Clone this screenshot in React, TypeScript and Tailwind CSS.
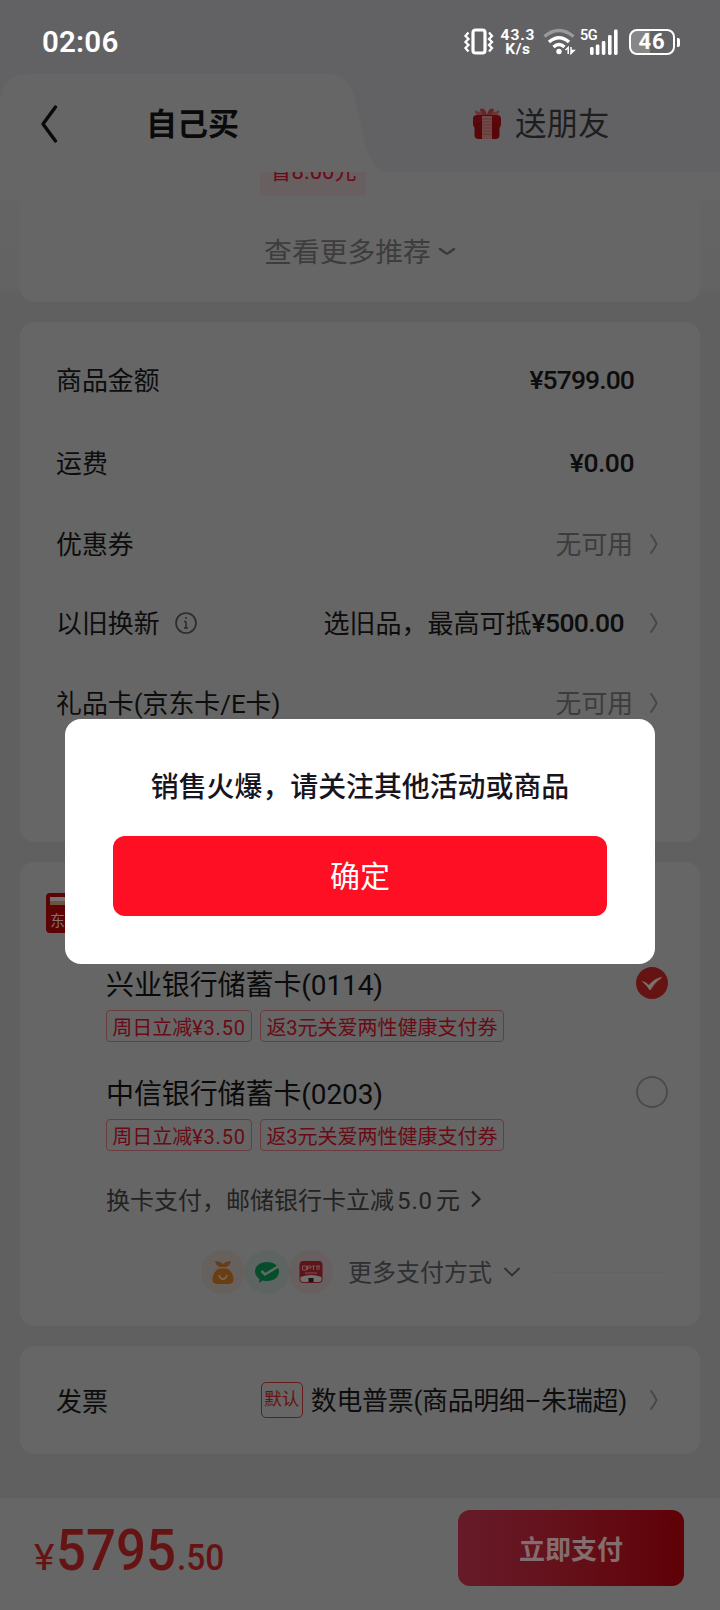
import React from "react";

const font =
  "font-[Roboto,'Noto_Sans_CJK_SC',sans-serif]";

function Arrow() {
  return (
    <svg width="10" height="22" viewBox="0 0 10 22" fill="none" className="shrink-0">
      <path d="M1.5 1.5 Q4 4 7.6 11 Q4 18 1.5 20.5" stroke="#474747" strokeWidth="1.8" />
    </svg>
  );
}

function StatusBar() {
  return (
    <div className="flex h-[72px] items-center pl-[42px] pr-[40px] text-white">
      <span className="mt-[14px] text-[29.5px] font-semibold leading-none tracking-[0.2px]">02:06</span>
      <div className="ml-auto mt-[12px] flex items-center">
        <svg width="32" height="28" viewBox="0 0 32 28" fill="none" stroke="#fff">
          <rect x="10" y="2" width="12" height="23" rx="2.5" strokeWidth="3.2" />
          <path d="M5.5 4.5 L2.5 8 L5.5 11 L2.5 14 L5.5 17 L2.5 20 L5.5 23.5" strokeWidth="2.3" />
          <path d="M26 4.5 L29 8 L26 11 L29 14 L26 17 L29 20 L26 23.5" strokeWidth="2.3" />
        </svg>
        <div className="ml-[5px] flex w-[36px] flex-col items-center text-[15.5px] font-bold leading-[14px]">
          <span className="tracking-[0.9px]">43.3</span>
          <span className="tracking-[0.6px]">K/s</span>
        </div>
        <svg className="ml-[7px]" width="33" height="28" viewBox="0 0 33 28" fill="none">
          <path d="M1.5 8.5 Q16 -3.5 30.5 8.5" stroke="#9a9a9b" strokeWidth="3.4" />
          <path d="M6 14 Q16 5.5 26 14" stroke="#fff" strokeWidth="3.6" />
          <path d="M10.5 19 Q16 14 21.5 19" stroke="#fff" strokeWidth="3.4" />
          <circle cx="16" cy="23.5" r="2.7" fill="#fff" />
          <path d="M22.5 22 L25.2 19.5 V26 M28 19 V25.5 L31 22.5 H28" stroke="#fff" strokeWidth="1.5" />
        </svg>
        <div className="relative ml-[4px] h-[28px] w-[40px]">
          <svg width="39" height="28" viewBox="0 0 39 28" fill="#fff">
            <rect x="10" y="19" width="3.6" height="8" rx="1.4" />
            <rect x="15.8" y="16.5" width="3.6" height="10.5" rx="1.4" />
            <rect x="21.8" y="13" width="3.6" height="14" rx="1.4" />
            <rect x="28" y="7" width="3.6" height="20" rx="1.4" />
            <rect x="34" y="1.5" width="3.6" height="25.5" rx="1.4" />
          </svg>
          <span className="absolute left-0 top-[1px] text-[14.5px] font-semibold leading-none tracking-[-0.5px]">5G</span>
        </div>
        <div className="ml-[9px] flex items-center">
          <div className="flex h-[26px] w-[46px] items-center justify-center rounded-[8px] border-[2px] border-white bg-[linear-gradient(90deg,#868687_46%,#626264_46%)] text-[22px] font-bold leading-none tracking-[1px]">
            46
          </div>
          <div className="ml-[2px] h-[9px] w-[3px] rounded-r-[2px] bg-white" />
        </div>
      </div>
    </div>
  );
}

function Gift() {
  return (
    <svg width="30" height="32" viewBox="0 0 30 32">
      <path d="M11 8 C5 8 2 5 3 2 C5 4 9 3 12 7 Z M19 8 C25 8 28 5 27 2 C25 4 21 3 18 7 Z" fill="#713433" />
      <path d="M8 1 C12 -1 14 3 15 7 C16 3 18 -1 22 1 C22 5 18 8 15 8 C12 8 8 5 8 1 Z" fill="#672525" />
      <rect x="1" y="7" width="28" height="13" rx="4" fill="#5d080c" />
      <rect x="2.5" y="15" width="25" height="16" rx="4" fill="#570609" />
      <rect x="10" y="8" width="10" height="23" fill="#704a47" />
      <path d="M10 11 H20 M10 14 H20 M10 17 H20 M10 20 H20 M10 23 H20 M10 26 H20" stroke="#65393a" strokeWidth="1" />
    </svg>
  );
}

function Header() {
  return (
    <div className="relative h-[100px]">
      <svg className="absolute left-0 top-0" width="400" height="100" viewBox="0 0 400 100">
        <path d="M0 26 Q3 2 28 2 H328 Q348 2 354 24 L366 74 Q372 98 390 100 H0 Z" fill="#666666" />
      </svg>
      <div className="relative flex h-full items-center pt-[3px]">
        <svg className="ml-[40px]" width="19" height="40" viewBox="0 0 19 40" fill="none">
          <path d="M15.5 3 L3 20 L15.5 37" stroke="#0a0a0a" strokeWidth="3.4" strokeLinecap="round" strokeLinejoin="round" />
        </svg>
        <span className="ml-[87px] w-[95px] whitespace-nowrap pt-px text-[31px] font-bold leading-none text-[#0a0a0a]">自己买</span>
        <div className="ml-[231px] flex items-center">
          <Gift />
          <span className="ml-[13px] whitespace-nowrap pt-[2px] text-[31.5px] leading-none text-[#1e1e1f]">送朋友</span>
        </div>
      </div>
    </div>
  );
}

function Row({ label, h, children, info }: { label: string; h: string; children: React.ReactNode; info?: boolean }) {
  return (
    <div className={`flex items-center leading-none ${h}`}>
      <span className="pt-[3px] text-[25.9px] text-[#0d0d0d]">{label}</span>
      {info && (
        <svg className="ml-[14px]" width="24" height="24" viewBox="0 0 24 24" fill="none" stroke="#2b2b2b">
          <circle cx="12" cy="12" r="10" strokeWidth="1.6" />
          <path d="M12 10.5 V17.5 M10 10.5 H12 M10 17 H14" strokeWidth="1.5" />
          <circle cx="12" cy="7" r="0.9" fill="#2b2b2b" stroke="none" />
        </svg>
      )}
      <div className="ml-auto flex items-center">{children}</div>
    </div>
  );
}

function Unavailable() {
  return (
    <>
      <span className="mr-[16px] pt-[3px] text-[25.8px] text-[#3c3c3c]">无可用</span>
      <Arrow />
    </>
  );
}

function Tags() {
  return (
    <div className="flex gap-[8px] text-[20px] leading-none text-[#6a0a15]">
      <span className="flex h-[32px] w-[146px] items-center justify-center whitespace-nowrap rounded-[4px] border border-[#6b3b40] pt-[3px]">
        周日立减<span className="tracking-[0.8px]">¥3.50</span>
      </span>
      <span className="flex h-[32px] w-[244px] items-center justify-center whitespace-nowrap rounded-[4px] border border-[#6b3b40] pt-[3px]">返3元关爱两性健康支付券</span>
    </div>
  );
}

function BankCard({ name, selected }: { name: string; selected?: boolean }) {
  return (
    <div className="h-[109px]">
      <div className="flex h-[40px] items-center justify-between">
        <span className="whitespace-nowrap pt-[5px] text-[28px] leading-none tracking-[-0.1px] text-[#0a0a0a]">{name}</span>
        {selected ? (
          <svg width="32" height="32" viewBox="0 0 32 32">
            <circle cx="16" cy="16" r="16" fill="#651413" />
            <path d="M6.5 14.5 Q11 16 13 18.500 Q18 12 25.5 10.500 Q19 14.5 14 23 Q11 18 6.5 14.5 Z" fill="#7e7270" stroke="#7e7270" strokeWidth="0.8" strokeLinejoin="round" />
          </svg>
        ) : (
          <span className="h-[32px] w-[32px] rounded-full border-2 border-[#4c4c4c]" />
        )}
      </div>
      <div className="pt-[7px]">
        <Tags />
      </div>
    </div>
  );
}

function MorePayments() {
  return (
    <div className="mt-[32px] flex h-[46px] items-center px-[36px]">
      <div className="h-px w-[145px]" />
      <span className="flex h-[44px] w-[44px] items-center justify-center rounded-full bg-[#67615d]">
        <svg width="24" height="26" viewBox="0 0 24 26">
          <path d="M4 2 Q9 2 12 5 Q15 2 20 2 Q19 7 15 8 H9 Q5 7 4 2 Z" fill="#673e1c" />
          <path d="M8 9.5 H16 Q22 13 22.5 20 Q23 25 18 25 H6 Q1 25 1.5 20 Q2 13 8 9.5 Z" fill="#693e13" />
          <path d="M8 16 Q9 20 12 20 Q15 20 16 16" stroke="#746354" strokeWidth="1.8" fill="none" />
        </svg>
      </span>
      <span className="flex h-[44px] w-[44px] items-center justify-center rounded-full bg-[#5e6461]">
        <svg width="26" height="24" viewBox="0 0 26 24">
          <path d="M13 2 C20 2 25 6 25 11.500 C25 17 20 21 13 21 Q10.500 21 8.500 20.500 L5 23 L5.500 19 C3 17 1 15 1 11.500 C1 6 6 2 13 2 Z" fill="#064d2c" />
          <path d="M7.500 11 L11 14.500 L24 6.500" stroke="#5f6b65" strokeWidth="2.500" fill="none" />
        </svg>
      </span>
      <span className="flex h-[44px] w-[44px] items-center justify-center rounded-full bg-[#675f60]">
        <svg width="24" height="24" viewBox="0 0 24 24">
          <rect x="0.500" y="1" width="23" height="22" rx="4" fill="#5d1519" />
          <path d="M1.500 17 Q12 13 22.500 17 V20 Q22 22 20 22 H4 Q2 22 1.500 20 Z" fill="#707070" />
          <rect x="9.500" y="18" width="5" height="4" fill="#161616" />
          <path d="M3.500 6 H7.500 V10 H3.500 Z M8.500 10 V6 H12 V8 H9 M13 6 H16 M14.500 6 V10 M17 6 H21 M18 6 V10 M20 6 V10 M6 13 H18" stroke="#7b5658" strokeWidth="1" fill="none" />
        </svg>
      </span>
      <span className="ml-[15px] whitespace-nowrap pt-[2px] text-[24px] leading-none text-[#2e2f32]">更多支付方式</span>
      <svg className="ml-[11px]" width="18" height="12" viewBox="0 0 18 12" fill="none">
        <path d="M1.500 2 L9 9.500 L16.500 2" stroke="#2e2f32" strokeWidth="1.800" />
      </svg>
      <div className="ml-[26px] h-px flex-1 bg-[#636363]" />
    </div>
  );
}

function Dialog() {
  return (
    <div className="absolute left-[65px] top-[719px] flex h-[245px] w-[590px] flex-col items-center rounded-[16px] bg-white pt-[54px]">
      <p className="whitespace-nowrap text-[27.9px] font-medium leading-[30px] text-[#14151f]">销售火爆，请关注其他活动或商品</p>
      <button className="mt-[33px] flex h-[80px] w-[494px] items-center justify-center rounded-[12px] bg-[#ff0f23] pt-[2px] text-[30px] leading-none text-white">
        确定
      </button>
    </div>
  );
}

export default function App() {
  return (
    <div className={`relative flex h-[1610px] w-[720px] flex-col overflow-hidden bg-[#606060] ${font}`}>
      <div className="bg-[#626264]">
        <StatusBar />
        <Header />
      </div>

      <div className="h-[130px] bg-[linear-gradient(180deg,#666666_28px,#646464_30px,#636363_116px,#606060_124px)] px-[20px]">
        <div className="flex h-[130px] flex-col items-center overflow-hidden rounded-b-[14px] bg-[#666666]">
          <div className="h-[24px] w-full overflow-hidden pl-[240px]">
            <span className="-mt-[17px] flex h-[41px] w-[106px] items-center justify-center whitespace-nowrap rounded-[4px] bg-[#675f60] pb-[8px] text-[22px] leading-none text-[#6c0a17]">
              省8.00元
            </span>
          </div>
          <div className="mt-[41px] flex h-[30px] items-center">
            <span className="pt-[2px] text-[27.8px] leading-none text-[#3d3d3d]">查看更多推荐</span>
            <svg className="ml-[7px]" width="18" height="10" viewBox="0 0 18 10" fill="none">
              <path d="M2 2 L7.500 6 Q9 7 10.500 6 L16 2" stroke="#3b3b3b" strokeWidth="2.600" strokeLinecap="round" />
            </svg>
          </div>
        </div>
      </div>

      <div className="mx-[20px] mt-[20px] h-[520px] rounded-[14px] bg-[#666666] pl-[36px] pr-[41px] pt-[17px]">
        <Row label="商品金额" h="h-[82px]">
          <span className="mr-[25px] text-[26.5px] font-medium tracking-[-0.9px] text-[#0d0d0d]">¥5799.00</span>
        </Row>
        <Row label="运费" h="h-[84px]">
          <span className="mr-[25px] pt-px text-[26.5px] font-medium tracking-[-0.5px] text-[#0d0d0d]">¥0.00</span>
        </Row>
        <Row label="优惠券" h="h-[78px]">
          <Unavailable />
        </Row>
        <Row label="以旧换新" h="h-[80px]" info>
          <span className="whitespace-nowrap pt-[2px] text-[26px] text-[#0d0d0d]">选旧品，最高可抵</span>
          <span className="mr-[25px] text-[26.5px] font-medium tracking-[-0.6px] text-[#0d0d0d]">¥500.00</span>
          <Arrow />
        </Row>
        <Row label="礼品卡(京东卡/E卡)" h="h-[80px]">
          <Unavailable />
        </Row>
      </div>

      <div className="mx-[20px] mt-[20px] h-[464px] rounded-[14px] bg-[#666666] pt-[31px]">
        <div className="ml-[26px] flex h-[40px] w-[40px] flex-col rounded-[4px] bg-[#5b0305] px-[4px] pt-[4px] text-[15px] leading-none text-[#85706e]">
          <span className="h-[8px] w-full bg-[linear-gradient(180deg,#737373_50%,#6b5540_50%)]" />
          <span className="mt-[9px]">东</span>
        </div>
        <div className="pl-[86px] pr-[32px] pt-[30px]">
          <BankCard name="兴业银行储蓄卡(0114)" selected />
          <BankCard name="中信银行储蓄卡(0203)" />
          <div className="flex h-[36px] items-center whitespace-nowrap pt-[4px] text-[24px] leading-none text-[#222]">
            <span>换卡支付，邮储银行卡立减</span>
            <span className="mx-[3px] tracking-[0.9px]">5.0</span>
            <span>元</span>
            <svg className="mb-[4px] ml-[10px]" width="12" height="18" viewBox="0 0 12 18" fill="none">
              <path d="M2 1.500 L9.500 9 L2 16.500" stroke="#222" strokeWidth="2.200" />
            </svg>
          </div>
        </div>
        <MorePayments />
      </div>

      <div className="mx-[20px] mt-[20px] flex h-[108px] items-center rounded-[14px] bg-[#666666] pl-[36px] pr-[41px] leading-none text-[#0d0d0d]">
        <span className="pt-[3px] text-[26px]">发票</span>
        <span className="ml-auto flex h-[36px] w-[42px] items-center justify-center whitespace-nowrap rounded-[5px] border border-[#671c1c] text-[17.500px] text-[#671212]">默认</span>
        <span className="ml-[8px] mr-[22px] whitespace-nowrap pt-[4px] text-[25.900px] tracking-[-0.25px]">数电普票(商品明细–朱瑞超)</span>
        <Arrow />
      </div>

      <div className="mt-[44px] flex h-[112px] items-start justify-between bg-[#666666] pl-[34px] pr-[36px] pt-[12px]">
        <div className="flex items-baseline pt-[11px] leading-none text-[#661313]">
          <span className="w-[21px] origin-left scale-x-[1.08] text-[36px]">¥</span>
          <span className="ml-[1px] w-[118px] origin-left scale-x-[0.91] text-[58px] font-medium">5795</span>
          <span className="ml-[3px] origin-left scale-x-[0.93] text-[36px] font-medium">.50</span>
        </div>
        <button className="flex h-[76px] w-[226px] items-center justify-center rounded-[12px] bg-[linear-gradient(90deg,#661b29,#641019_50%,#600007)] pt-[4px] text-[26px] font-bold leading-none text-[#856d6f]">
          立即支付
        </button>
      </div>

      <Dialog />
    </div>
  );
}
